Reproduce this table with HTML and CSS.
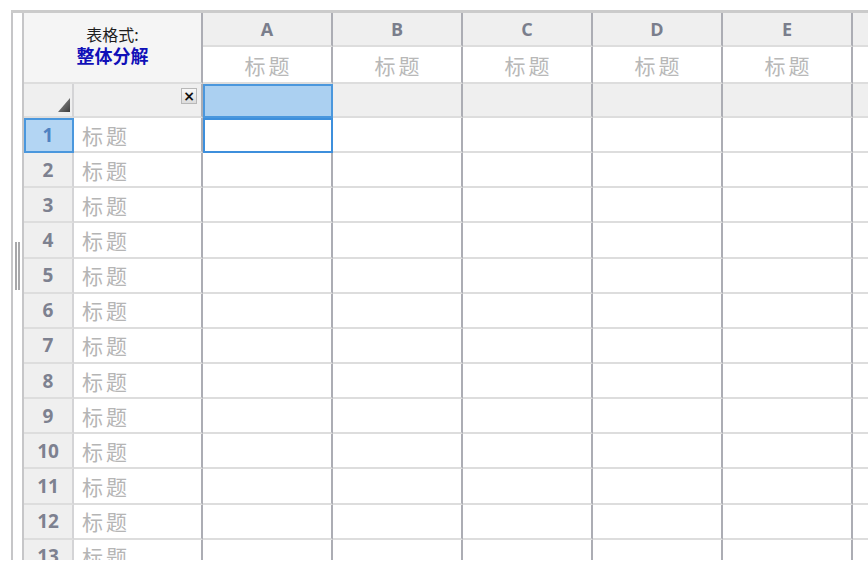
FILE: index.html
```html
<!DOCTYPE html>
<html lang="zh">
<head>
<meta charset="utf-8">
<link rel="stylesheet" href="styles.css">
</head>
<body>
<div class="frame">
  <div class="side"><div class="thumb"></div></div>
  <div class="tick"></div>
  <div class="viewport">
    <div class="sheet">
      <div class="corner"><div class="fmt">表格式:</div><div class="mode">整体分解</div></div>
      <div class="ch">A</div><div class="ch">B</div><div class="ch">C</div><div class="ch">D</div><div class="ch">E</div><div class="ch"></div>
      <div class="cs">标题</div><div class="cs">标题</div><div class="cs">标题</div><div class="cs">标题</div><div class="cs">标题</div><div class="cs"></div>

      <div class="rh rh-corner"><svg width="12" height="14" viewBox="0 0 12 14"><defs><linearGradient id="tg" x1="0" y1="0" x2="1" y2="1"><stop offset="0" stop-color="#9a9a9a"/><stop offset="1" stop-color="#3c3c3c"/></linearGradient></defs><polygon points="12,0 12,14 0,14" fill="url(#tg)"/></svg></div>
      <div class="tt tt-gray"><span class="close">×</span></div>
      <div class="g sel-head"></div><div class="g"></div><div class="g"></div><div class="g"></div><div class="g"></div><div class="g"></div>

      <div class="rh rh-sel">1</div><div class="tt">标题</div><div class="d a1"></div><div class="d"></div><div class="d"></div><div class="d"></div><div class="d"></div><div class="d"></div>
      <div class="rh">2</div><div class="tt">标题</div><div class="d"></div><div class="d"></div><div class="d"></div><div class="d"></div><div class="d"></div><div class="d"></div>
      <div class="rh">3</div><div class="tt">标题</div><div class="d"></div><div class="d"></div><div class="d"></div><div class="d"></div><div class="d"></div><div class="d"></div>
      <div class="rh">4</div><div class="tt">标题</div><div class="d"></div><div class="d"></div><div class="d"></div><div class="d"></div><div class="d"></div><div class="d"></div>
      <div class="rh">5</div><div class="tt">标题</div><div class="d"></div><div class="d"></div><div class="d"></div><div class="d"></div><div class="d"></div><div class="d"></div>
      <div class="rh">6</div><div class="tt">标题</div><div class="d"></div><div class="d"></div><div class="d"></div><div class="d"></div><div class="d"></div><div class="d"></div>
      <div class="rh">7</div><div class="tt">标题</div><div class="d"></div><div class="d"></div><div class="d"></div><div class="d"></div><div class="d"></div><div class="d"></div>
      <div class="rh">8</div><div class="tt">标题</div><div class="d"></div><div class="d"></div><div class="d"></div><div class="d"></div><div class="d"></div><div class="d"></div>
      <div class="rh">9</div><div class="tt">标题</div><div class="d"></div><div class="d"></div><div class="d"></div><div class="d"></div><div class="d"></div><div class="d"></div>
      <div class="rh">10</div><div class="tt">标题</div><div class="d"></div><div class="d"></div><div class="d"></div><div class="d"></div><div class="d"></div><div class="d"></div>
      <div class="rh">11</div><div class="tt">标题</div><div class="d"></div><div class="d"></div><div class="d"></div><div class="d"></div><div class="d"></div><div class="d"></div>
      <div class="rh">12</div><div class="tt">标题</div><div class="d"></div><div class="d"></div><div class="d"></div><div class="d"></div><div class="d"></div><div class="d"></div>
      <div class="rh">13</div><div class="tt">标题</div><div class="d"></div><div class="d"></div><div class="d"></div><div class="d"></div><div class="d"></div><div class="d"></div>
    </div>
  </div>
</div>
</body>
</html>
```
FILE: styles.css
```css
html, body {
  margin: 0;
  padding: 0;
  background: #ffffff;
}

.frame {
  position: relative;
  display: flex;
  margin: 10px 0 0 11px;
  height: 550px;
  border-top: 3px solid #cbcbcb;
  box-sizing: border-box;
  overflow: hidden;
}

.side {
  flex: 0 0 13px;
  box-sizing: border-box;
  border-left: 2px solid #c6c6c8;
  border-right: 2px solid #c6c6c8;
  display: flex;
  flex-direction: column;
  align-items: flex-start;
}

.thumb {
  margin: 229px 0 0 2px;
  width: 1px;
  height: 48px;
  border-left: 2px solid #a8a8aa;
  border-right: 2px solid #a8a8aa;
}

.tick {
  position: absolute;
  left: -2px;
  top: 500px;
  width: 2px;
  height: 11px;
  background: #6a6a6a;
}

.viewport {
  flex: 1 1 auto;
  min-width: 0;
  overflow: hidden;
}

.sheet {
  display: grid;
  grid-template-columns: 50px 129px repeat(6, 130px);
  grid-template-rows: 34px 37px 34px;
  grid-auto-rows: 35.15px;
  font-family: "Noto Sans", "Noto Sans CJK SC", sans-serif;
}

.sheet > div {
  box-sizing: border-box;
  border-right: 2px solid #acadb4;
  border-bottom: 2px solid #dddddd;
}

.corner {
  grid-column: 1 / 3;
  grid-row: 1 / 3;
  background: #f5f5f5;
  display: flex;
  flex-direction: column;
  align-items: center;
  justify-content: center;
  padding-bottom: 6px;
  font-family: "Noto Sans CJK SC", sans-serif;
}

.fmt {
  font-size: 16px;
  line-height: 20px;
  color: #1e1e1e;
}

.mode {
  font-size: 18px;
  line-height: 22px;
  font-weight: 700;
  color: #1010b8;
}

.ch {
  background: #efefef;
  display: flex;
  align-items: center;
  justify-content: center;
  font-family: "Open Sans", "Noto Sans", sans-serif;
  font-weight: 700;
  font-size: 18px;
  color: #7a7e8c;
}

.cs {
  background: #ffffff;
  display: flex;
  align-items: center;
  justify-content: center;
  font-family: "Noto Sans CJK SC", sans-serif;
  font-size: 21px;
  letter-spacing: 3px;
  padding-left: 3px;
  color: #b8b8b8;
}

.g {
  background: #efefef;
}

.sel-head {
  background: #abd0f1;
  outline: 2px solid #4a97dd;
  outline-offset: -2px;
}

.sheet > .rh {
  background: #efefef;
  border-right: 2px solid #d4d4d6;
  display: flex;
  align-items: center;
  justify-content: center;
  font-family: "Open Sans", "Noto Sans", sans-serif;
  font-weight: 700;
  font-size: 19px;
  color: #7d8190;
}

.sheet > .rh-corner {
  align-items: flex-end;
  justify-content: flex-end;
  padding: 0 2px 4px 0;
}

.sheet > .rh-sel {
  background: #b3d5f3;
  color: #4f82c2;
  outline: 2px solid #4a97dd;
  outline-offset: -2px;
}

.tt {
  background: #ffffff;
  display: flex;
  align-items: center;
  padding-left: 8px;
  font-family: "Noto Sans CJK SC", sans-serif;
  font-size: 21px;
  letter-spacing: 3px;
  color: #b5b5b5;
}

.tt-gray {
  background: #efefef;
  align-items: flex-start;
  justify-content: flex-end;
  padding: 4px 4px 0 0;
}

.close {
  width: 16px;
  height: 16px;
  box-sizing: border-box;
  border: 1px solid #b8b8b8;
  background: linear-gradient(#f8f8f8, #dcdcdc);
  display: flex;
  align-items: center;
  justify-content: center;
  font-family: "DejaVu Sans", sans-serif;
  font-weight: 700;
  font-size: 14px;
  line-height: 1;
  letter-spacing: 0;
  color: #111111;
}

.d {
  background: #ffffff;
}

.a1 {
  outline: 2px solid #3d8fdc;
  outline-offset: -2px;
}
```
